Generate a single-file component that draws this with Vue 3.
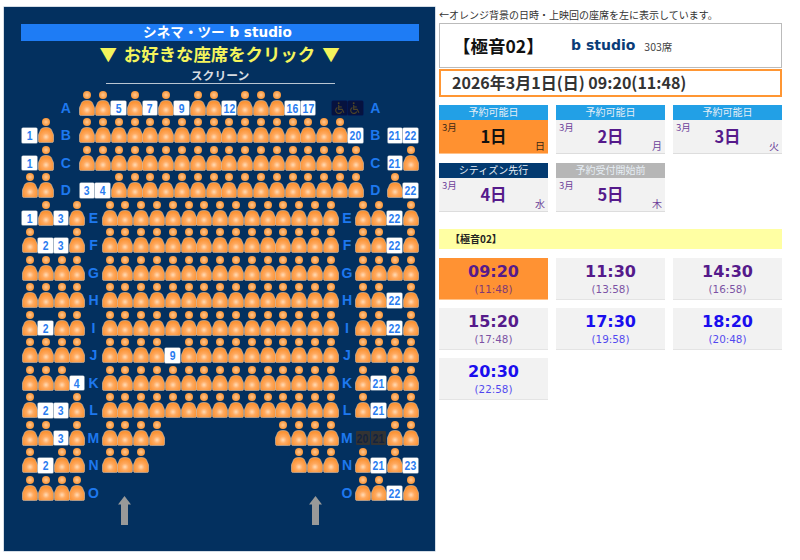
<script setup>
const rowSpecs = [
  { label: 'A', wide: false, left: '_ _', mid: 'P P 5 P 7 P 9 P P 12 P P P 16 17 _ W W', right: '_ _' },
  { label: 'B', wide: false, left: '1 P', mid: 'P P P P P P P P P P P P P P P P P 20', right: '21 22' },
  { label: 'C', wide: false, left: '1 P', mid: 'P P P P P P P P P P P P P P P P P P', right: '21 P' },
  { label: 'D', wide: false, left: 'P P', mid: '3 4 P P P P P P P P P P P P P P P P', right: 'P 22' },
  { label: 'E', wide: true, left: '1 P 3 P', mid: 'P P P P P P P P P P P P P P P', right: 'P P 22 P' },
  { label: 'F', wide: true, left: 'P 2 3 P', mid: 'P P P P P P P P P P P P P P P', right: 'P P 22 P' },
  { label: 'G', wide: true, left: 'P P P P', mid: 'P P P P P P P P P P P P P P P', right: 'P P P P' },
  { label: 'H', wide: true, left: 'P P P P', mid: 'P P P P P P P P P P P P P P P', right: 'P P 22 P' },
  { label: 'I', wide: true, left: 'P 2 P P', mid: 'P P P P P P P P P P P P P P P', right: 'P P 22 P' },
  { label: 'J', wide: true, left: 'P P P P', mid: 'P P P P 9 P P P P P P P P P P', right: 'P P P P' },
  { label: 'K', wide: true, left: 'P P P 4', mid: 'P P P P P P P P P P P P P P P', right: 'P 21 P P' },
  { label: 'L', wide: true, left: 'P 2 3 P', mid: 'P P P P P P P P P P P P P P P', right: 'P 21 P P' },
  { label: 'M', wide: true, left: 'P P 3 P', mid: 'P P P P _ _ _ _ _ _ _ P P P P', right: 'd20 d21 P P' },
  { label: 'N', wide: true, left: 'P 2 P P', mid: 'P P P _ _ _ _ _ _ _ _ _ P P P', right: 'P 21 P 23' },
  { label: 'O', wide: true, left: 'P P P P', mid: '_ _ _ _ _ _ _ _ _ _ _ _ _ _ _', right: 'P P 22 P' },
]

const parse = (spec) =>
  spec.split(' ').map((tok) => {
    if (tok === 'P') return { kind: 'person' }
    if (tok === '_') return { kind: 'empty' }
    if (tok === 'W') return { kind: 'wheel' }
    if (tok[0] === 'd') return { kind: 'dark', text: tok.slice(1) }
    return { kind: 'free', text: tok }
  })

const rows = rowSpecs.map((r) => ({
  label: r.label,
  wide: r.wide,
  left: parse(r.left),
  mid: parse(r.mid),
  right: parse(r.right),
}))

const days = [
  { status: '予約可能日', tone: 'open', day: '1日', week: '日', active: true },
  { status: '予約可能日', tone: 'open', day: '2日', week: '月' },
  { status: '予約可能日', tone: 'open', day: '3日', week: '火' },
  { status: 'シティズン先行', tone: 'citizen', day: '4日', week: '水' },
  { status: '予約受付開始前', tone: 'before', day: '5日', week: '木' },
]

const times = [
  { start: '09:20', end: '(11:48)', tone: 'visited', active: true },
  { start: '11:30', end: '(13:58)', tone: 'visited' },
  { start: '14:30', end: '(16:58)', tone: 'visited' },
  { start: '15:20', end: '(17:48)', tone: 'visited' },
  { start: '17:30', end: '(19:58)', tone: 'link' },
  { start: '18:20', end: '(20:48)', tone: 'link' },
  { start: '20:30', end: '(22:58)', tone: 'link' },
]
</script>

<template>
  <div class="page">
    <svg class="defs" width="0" height="0" aria-hidden="true">
      <defs>
        <radialGradient id="bodyGrad" cx="0.5" cy="0.62" r="0.6">
          <stop offset="0" stop-color="#ffdcb8" />
          <stop offset="0.38" stop-color="#ffaa60" />
          <stop offset="1" stop-color="#f98d2a" />
        </radialGradient>
        <radialGradient id="headGrad" cx="0.5" cy="0.5" r="0.55">
          <stop offset="0" stop-color="#ffc792" />
          <stop offset="1" stop-color="#f7902e" />
        </radialGradient>
        <symbol id="person" viewBox="0 0 16 26">
          <circle cx="8" cy="5" r="4" fill="url(#headGrad)" />
          <path
            d="M8 10.6C12 10.6 13.3 12 13.9 14C14.3 15.6 15.6 16.6 15.6 19V23.7Q15.6 25.6 13.7 25.6H2.3Q0.4 25.6 0.4 23.7V19C0.4 16.6 1.7 15.6 2.1 14C2.7 12 4 10.6 8 10.6Z"
            fill="url(#bodyGrad)"
            stroke="#d6c6b6"
            stroke-width="0.6"
          />
        </symbol>
      </defs>
    </svg>

    <section class="map">
      <h1 class="title">シネマ・ツー&nbsp;b studio</h1>
      <p class="prompt"><span>▼</span><span>お好きな座席をクリック</span><span>▼</span></p>
      <div class="screen">スクリーン</div>

      <div class="seats">
        <div v-for="row in rows" :key="row.label" class="row" :class="{ wide: row.wide }">
          <template v-for="(block, bi) in [row.left, 'L', row.mid, 'R', row.right]" :key="bi">
            <span v-if="block === 'L' || block === 'R'" class="label" :class="block === 'L' ? 'label-l' : 'label-r'">{{ row.label }}</span>
            <div v-else class="block">
              <div v-for="(cell, ci) in block" :key="ci" class="cell">
                <svg v-if="cell.kind === 'person'" class="person" viewBox="0 0 16 26"><use href="#person" /></svg>
                <span v-else-if="cell.kind === 'free'" class="tile free"><span class="num">{{ cell.text }}</span></span>
                <span v-else-if="cell.kind === 'dark'" class="tile dark"><span class="num">{{ cell.text }}</span></span>
                <span v-else-if="cell.kind === 'wheel'" class="tile wheel">
                  <svg viewBox="0 0 16 16" width="14" height="14" fill="none" stroke="#4d4528" stroke-width="1.3">
                    <circle cx="6.5" cy="2.6" r="1.1" fill="#4d4528" stroke="none" />
                    <path d="M6.5 4.5V9.5H10.5L12.5 13.5" />
                    <path d="M6.5 6.8H10" />
                    <path d="M5 7.4A3.6 3.6 0 1 0 10 12" />
                  </svg>
                </span>
              </div>
            </div>
          </template>
        </div>
      </div>

      <svg class="arrow arrow-l" viewBox="0 0 13 29"><path d="M6.5 0L13 8.5H10V29H3V8.5H0Z" fill="#999" /></svg>
      <svg class="arrow arrow-r" viewBox="0 0 13 29"><path d="M6.5 0L13 8.5H10V29H3V8.5H0Z" fill="#999" /></svg>
    </section>

    <section class="side">
      <p class="note">←オレンジ背景の日時・上映回の座席を左に表示しています。</p>

      <div class="info">
        <span class="info-name">【極音02】</span>
        <span class="info-studio">b studio</span>
        <span class="info-count">303席</span>
      </div>
      <div class="when">2026年3月1日(日) 09:20(11:48)</div>

      <div class="days">
        <div v-for="d in days" :key="d.day" class="day" :class="{ active: d.active }">
          <div class="day-status" :class="d.tone">{{ d.status }}</div>
          <div class="day-body">
            <span class="day-month">3月</span>
            <span class="day-num">{{ d.day }}</span>
            <span class="day-week">{{ d.week }}</span>
          </div>
        </div>
      </div>

      <div class="screen-bar">【極音02】</div>

      <div class="times">
        <div v-for="t in times" :key="t.start" class="time" :class="[t.tone, { active: t.active }]">
          <span class="time-start">{{ t.start }}</span>
          <span class="time-end">{{ t.end }}</span>
        </div>
      </div>
    </section>
  </div>
</template>

<style scoped>
.page {
  width: 800px;
  height: 560px;
  display: flex;
  align-items: flex-start;
  box-sizing: border-box;
  padding: 7px 0 0 4px;
  background: #fff;
  overflow: hidden;
  font-family: "Noto Sans CJK JP", "Liberation Sans", sans-serif;
}
.defs {
  position: absolute;
}
.map {
  position: relative;
  width: 431px;
  height: 544px;
  box-sizing: border-box;
  padding-top: 17px;
  background: #03305f;
  box-shadow: 0 0 0 0.5px #a9bccd;
  flex: none;
}
.title {
  margin: 0 16px 0 17px;
  height: 17px;
  line-height: 16px;
  padding-right: 5px;
  background: #1e7cf5;
  color: #fff;
  font-family: "DejaVu Sans", "Noto Sans CJK JP", sans-serif;
  font-size: 13.6px;
  font-weight: 700;
  text-align: center;
}
.prompt {
  margin: 1px 0 0;
  height: 24px;
  line-height: 24px;
  color: #f4f45c;
  font-size: 17.4px;
  font-weight: 700;
  display: flex;
  justify-content: center;
  gap: 7px;
}
.screen {
  width: 229px;
  margin: 1px 0 0 101.5px;
  height: 17px;
  line-height: 16px;
  box-sizing: border-box;
  border-bottom: 1px solid #b9c5d2;
  color: #d8dde2;
  font-size: 11.8px;
  font-weight: 700;
  text-align: center;
}
.seats {
  margin-top: 4px;
}
.row {
  display: flex;
  height: 27.5px;
  padding-left: 18px;
}
.block {
  display: flex;
}
.cell {
  width: 15.8px;
  height: 27.5px;
  position: relative;
  flex: none;
}
.person {
  position: absolute;
  left: -0.1px;
  bottom: 0;
  width: 16px;
  height: 26px;
}
.tile {
  position: absolute;
  left: 0.3px;
  bottom: 0.4px;
  width: 14.6px;
  height: 14.2px;
  box-sizing: border-box;
  border-radius: 1px;
  display: flex;
  align-items: center;
  justify-content: center;
  font-family: "Liberation Sans", sans-serif;
  font-size: 13px;
  font-weight: 700;
}
.num {
  display: block;
  transform: scaleX(0.8);
  letter-spacing: 0.2px;
  line-height: 1;
}
.free {
  background: #fff;
  color: #2a7df0;
  box-shadow: 0 0 0 0.6px #c9d0d8;
}
.dark {
  background: #333;
  color: #14233f;
}
.wheel {
  background: #06123f;
  box-shadow: 0 0 0 0.5px #041050;
}
.label {
  flex: none;
  display: flex;
  align-items: flex-end;
  justify-content: center;
  height: 26.5px;
  line-height: 1;
  color: #1e78ee;
  font-family: "Liberation Sans", sans-serif;
  font-size: 14px;
  font-weight: 700;
}
.label-l {
  width: 25.7px;
  padding-right: 1.5px;
  box-sizing: border-box;
}
.label-r {
  width: 23.6px;
}
.row.wide .label-l {
  width: 16.5px;
  padding-right: 0;
}
.row.wide .label-r {
  width: 16.6px;
}
.arrow {
  position: absolute;
  top: 489px;
  width: 13px;
  height: 29px;
}
.arrow-l {
  left: 114px;
}
.arrow-r {
  left: 305px;
}

.side {
  width: 343px;
  margin-left: 4px;
  flex: none;
}
.note {
  margin: 0;
  height: 15.5px;
  line-height: 15px;
  font-size: 10px;
  color: #333;
  white-space: nowrap;
}
.info {
  height: 45px;
  box-sizing: border-box;
  border: 1px solid #bbb;
  display: flex;
  align-items: center;
  padding-left: 13px;
}
.info-name {
  color: #111;
  font-size: 17.5px;
  font-weight: 700;
  width: 118px;
}
.info-studio {
  color: #0a3c78;
  font-family: "DejaVu Sans", sans-serif;
  font-size: 14px;
  font-weight: 700;
}
.info-count {
  margin-left: 9px;
  margin-top: 2px;
  color: #444;
  font-size: 10.5px;
}
.when {
  margin-top: 1px;
  height: 28px;
  box-sizing: border-box;
  border: 2px solid #ff9633;
  padding-left: 11px;
  line-height: 22px;
  color: #333;
  font-size: 16px;
  font-weight: 700;
  white-space: nowrap;
}
.days {
  margin-top: 8px;
  display: grid;
  grid-template-columns: repeat(3, 109px);
  column-gap: 8px;
  row-gap: 9px;
}
.day {
  height: 49px;
  box-sizing: border-box;
  background: #f2f2f2;
  border-bottom: 1px solid #ddd;
  display: flex;
  flex-direction: column;
}
.day.active {
  background: #ff9130;
  border-bottom-color: #ffc28a;
}
.day-status {
  height: 15px;
  line-height: 14px;
  flex: none;
  color: #e6eef5;
  font-size: 10px;
  text-align: center;
}
.day-status.open {
  background: #22a0e6;
}
.day-status.citizen {
  background: #033a70;
}
.day-status.before {
  background: #b6b6b6;
}
.day-body {
  flex: 1;
  display: grid;
  grid-template-columns: 1fr;
  position: relative;
  color: #551a8b;
}
.day.active .day-body {
  color: #111;
}
.day-month {
  position: absolute;
  left: 3px;
  top: 0;
  font-size: 9.5px;
  line-height: 14px;
  opacity: 0.85;
}
.day-num {
  text-align: center;
  font-size: 16.5px;
  font-weight: 700;
  line-height: 32px;
}
.day-week {
  position: absolute;
  right: 3px;
  bottom: 0;
  font-size: 10px;
  line-height: 15px;
  opacity: 0.85;
}
.screen-bar {
  margin-top: 17.5px;
  height: 20px;
  line-height: 20px;
  padding-left: 11px;
  background: #ffffa3;
  color: #222;
  font-size: 10px;
  font-weight: 700;
}
.times {
  margin-top: 9px;
  display: grid;
  grid-template-columns: repeat(3, 109px);
  column-gap: 8px;
  row-gap: 8px;
}
.time {
  height: 42px;
  box-sizing: border-box;
  background: #f2f2f2;
  border-bottom: 1.5px solid #e4e4e4;
  display: flex;
  flex-direction: column;
  align-items: center;
  padding-top: 4px;
}
.time.active {
  background: #ff9233;
  border-bottom-color: #ffc28a;
}
.time.visited {
  color: #551a8b;
}
.time.link {
  color: #1a0dee;
}
.time-start {
  font-family: "DejaVu Sans", sans-serif;
  font-size: 16px;
  font-weight: 700;
  line-height: 20px;
}
.time-end {
  font-family: "DejaVu Sans", sans-serif;
  font-size: 10.4px;
  line-height: 14px;
  opacity: 0.75;
}
</style>
